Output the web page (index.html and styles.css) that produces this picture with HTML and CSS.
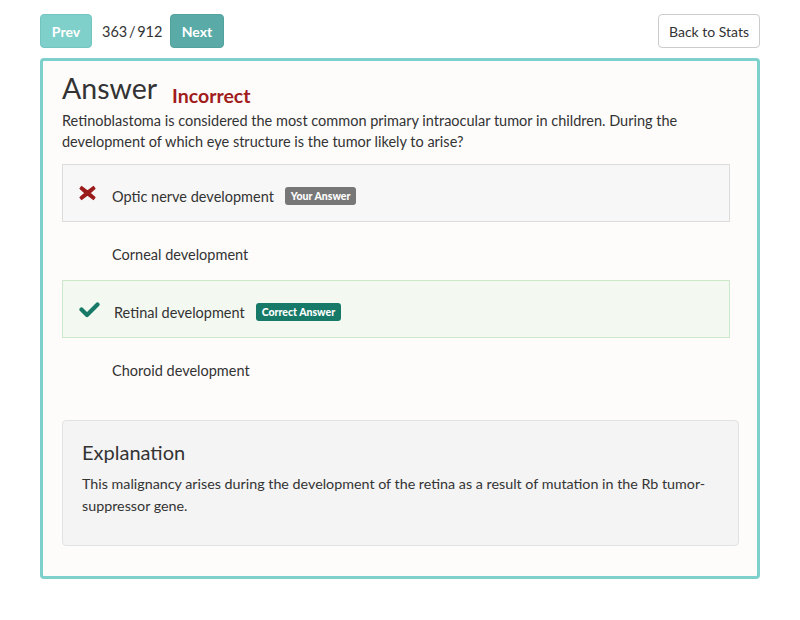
FILE: index.html
```html
<!DOCTYPE html>
<html>
<head>
<meta charset="utf-8">
<link rel="stylesheet" href="styles.css">
</head>
<body>
<div class="page">
  <div class="topbar">
    <div class="nav">
      <button class="btn btn-prev">Prev</button>
      <span class="count">363 / 912</span>
      <button class="btn btn-next">Next</button>
    </div>
    <button class="btn btn-back">Back to Stats</button>
  </div>
  <div class="card">
    <div class="title-row">
      <h1 class="title">Answer</h1>
      <span class="status">Incorrect</span>
    </div>
    <p class="question">Retinoblastoma is considered the most common primary intraocular tumor in children. During the development of which eye structure is the tumor likely to arise?</p>
    <div class="options">
      <div class="option option-wrong">
        <svg class="icon" width="17" height="16" viewBox="0 0 17 16"><path d="M2.5 1.5 L8.5 6 L14.5 1.5 L16 3.5 L11 8 L16 12.5 L14.5 14.5 L8.5 10 L2.5 14.5 L1 12.5 L6 8 L1 3.5 Z" fill="#9b1c1c" stroke="#9b1c1c" stroke-width="1.2" stroke-linejoin="round"/></svg>
        <span class="opt-text">Optic nerve development</span>
        <span class="badge badge-gray">Your Answer</span>
      </div>
      <div class="option option-plain">
        <span class="opt-text">Corneal development</span>
      </div>
      <div class="option option-right">
        <svg class="icon" width="21" height="17" viewBox="0 0 21 17"><path d="M2.5 8.5 L8 14 L18.5 3.5" fill="none" stroke="#177a68" stroke-width="4.2" stroke-linecap="round" stroke-linejoin="round"/></svg>
        <span class="opt-text">Retinal development</span>
        <span class="badge badge-green">Correct Answer</span>
      </div>
      <div class="option option-plain">
        <span class="opt-text">Choroid development</span>
      </div>
    </div>
    <div class="explanation">
      <h2 class="exp-title">Explanation</h2>
      <p class="exp-text">This malignancy arises during the development of the retina as a result of mutation in the Rb tumor-suppressor gene.</p>
    </div>
  </div>
</div>
</body>
</html>
```
FILE: styles.css
```css
* { box-sizing: border-box; }
html, body { margin: 0; padding: 0; background: #ffffff; }
body { font-family: Lato, "Open Sans", sans-serif; color: #333; }
.page { padding: 14px 40px 0 40px; }
.topbar { display: flex; justify-content: space-between; align-items: center; height: 34px; }
.nav { display: flex; align-items: center; }
.btn {
  font-family: Lato, sans-serif; font-size: 14px; height: 34px;
  border-radius: 4px; border: 1px solid transparent; padding: 0 12px; cursor: pointer;
}
.btn-prev { background: #7fcfcb; color: #fff; border-color: #74c5c1; width: 52px; font-weight: bold; padding: 0; }
.btn-next { background: #5aaba7; color: #fff; border-color: #52a29e; width: 54px; font-weight: bold; padding: 0; }
.count { font-size: 14.5px; color: #333; margin: 0 10px; width: 58px; white-space: nowrap; word-spacing: -2px; }
.btn-back { background: #fff; border-color: #ccc; color: #333; width: 102px; padding: 0; }
.card {
  margin-top: 10px; border: 3px solid #7dd0cc; border-radius: 4px;
  background: #fdfcfb; padding: 6px 19px 30px 19px; width: 720px;
}
.title-row { display: flex; align-items: baseline; }
.title { font-size: 28.5px; font-weight: 400; margin: 0; color: #333; line-height: 43px; }
.status { font-size: 19.5px; font-weight: bold; color: #a11c1c; margin-left: 15px; position: relative; top: 4px; }
.question { font-size: 14.5px; line-height: 21px; margin: 0 0 12px 0; color: #333; }
.options { display: flex; flex-direction: column; width: 668px; }
.option { height: 58px; display: flex; align-items: center; font-size: 14.5px; border: 1px solid transparent; }
.option-wrong { background: #f7f7f7; border-color: #dcdcdc; padding-left: 16px; }
.option-right { background: #f3f9f1; border-color: #cde8c8; padding-left: 16px; }
.option-plain { padding-left: 49px; }
.opt-text { margin-top: 6px; }
.option-wrong .opt-text { margin-left: 16px; }
.option-right .opt-text { margin-left: 14px; }
.icon { display: block; }
.badge {
  font-size: 10.5px; font-weight: 900; color: #fff; border-radius: 3px;
  padding: 3px 6px; margin-left: 11px; line-height: 12px; margin-top: 6px;
}
.badge-gray { background: #777; }
.badge-green { background: #177a68; }
.explanation {
  margin-top: 24px; background: #f4f4f4; border: 1px solid #e2e2e2; border-radius: 4px;
  padding: 16px 19px 28px 19px; width: 677px;
}
.exp-title { font-size: 20px; font-weight: 400; margin: 0 0 6px 0; color: #333; line-height: 30px; }
.exp-text { font-size: 14.3px; line-height: 22px; margin: 0; color: #333; }
```
